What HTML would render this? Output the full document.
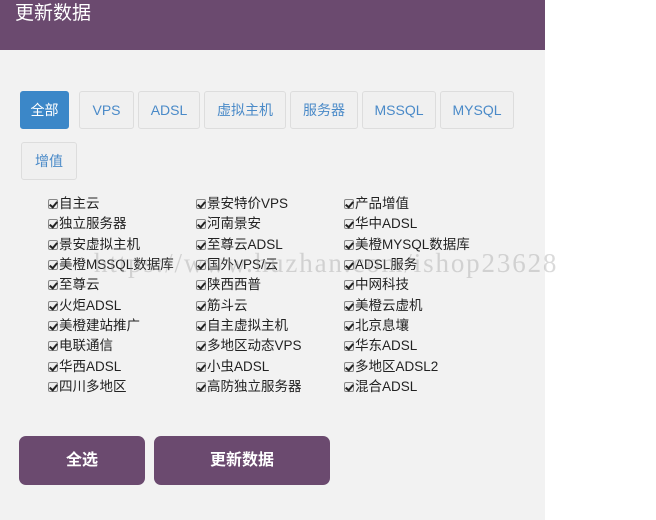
<!DOCTYPE html>
<html><head><meta charset="utf-8"><style>
*{margin:0;padding:0;box-sizing:border-box}
body{width:656px;height:520px;background:#fff;font-family:"Liberation Sans","Noto Sans CJK SC",sans-serif;position:relative;overflow:hidden}
.panel{position:absolute;left:0;top:0;width:545px;height:520px;background:#f2f2f2}
.hd{position:absolute;left:0;top:0;width:545px;height:50px;background:#6b4a6f;color:#fff;font-size:19px;padding:2px 0 0 15px;line-height:24px}
.tab{position:absolute;height:38px;border:1px solid #ddd;border-radius:3px;background:#f0f0f0;color:#4a8ac8;font-size:14px;text-align:center;line-height:36px}
.tab.on{background:#3b87c8;color:#fff;border-color:#3b87c8}
.cb{position:absolute;font-size:13.5px;color:#222;line-height:20px;white-space:nowrap}
.cb i{display:inline-block;width:10px;height:10px;border:1px solid #888;border-radius:2px;background:#eee;vertical-align:-1px;margin-right:1px;position:relative}
.cb i:after{content:"";position:absolute;left:2px;top:0px;width:3px;height:6px;border:solid #222;border-width:0 2px 2px 0;transform:rotate(40deg)}
.btn{position:absolute;top:436px;height:49px;background:#6b4a6f;border-radius:7px;color:#fff;font-weight:bold;font-size:16px;text-align:center;line-height:49px}
.wm{position:absolute;left:94px;top:248px;font-family:"Liberation Serif",serif;font-size:27px;color:rgba(150,150,150,0.35);letter-spacing:1.85px;white-space:nowrap}
</style></head><body>
<div class="panel"></div>
<div class="hd">更新数据</div>
<div class="tab on" style="left:20px;top:91px;width:49px">全部</div>
<div class="tab" style="left:79px;top:91px;width:55px">VPS</div>
<div class="tab" style="left:138px;top:91px;width:62px">ADSL</div>
<div class="tab" style="left:204px;top:91px;width:82px">虚拟主机</div>
<div class="tab" style="left:290px;top:91px;width:68px">服务器</div>
<div class="tab" style="left:362px;top:91px;width:74px">MSSQL</div>
<div class="tab" style="left:440px;top:91px;width:74px">MYSQL</div>
<div class="tab" style="left:21px;top:142px;width:56px">增值</div>

<div class="cb" style="left:48px;top:194px"><i></i>自主云</div>
<div class="cb" style="left:48px;top:214px"><i></i>独立服务器</div>
<div class="cb" style="left:48px;top:235px"><i></i>景安虚拟主机</div>
<div class="cb" style="left:48px;top:255px"><i></i>美橙MSSQL数据库</div>
<div class="cb" style="left:48px;top:275px"><i></i>至尊云</div>
<div class="cb" style="left:48px;top:296px"><i></i>火炬ADSL</div>
<div class="cb" style="left:48px;top:316px"><i></i>美橙建站推广</div>
<div class="cb" style="left:48px;top:336px"><i></i>电联通信</div>
<div class="cb" style="left:48px;top:357px"><i></i>华西ADSL</div>
<div class="cb" style="left:48px;top:377px"><i></i>四川多地区</div>

<div class="cb" style="left:196px;top:194px"><i></i>景安特价VPS</div>
<div class="cb" style="left:196px;top:214px"><i></i>河南景安</div>
<div class="cb" style="left:196px;top:235px"><i></i>至尊云ADSL</div>
<div class="cb" style="left:196px;top:255px"><i></i>国外VPS/云</div>
<div class="cb" style="left:196px;top:275px"><i></i>陕西西普</div>
<div class="cb" style="left:196px;top:296px"><i></i>筋斗云</div>
<div class="cb" style="left:196px;top:316px"><i></i>自主虚拟主机</div>
<div class="cb" style="left:196px;top:336px"><i></i>多地区动态VPS</div>
<div class="cb" style="left:196px;top:357px"><i></i>小虫ADSL</div>
<div class="cb" style="left:196px;top:377px"><i></i>高防独立服务器</div>

<div class="cb" style="left:344px;top:194px"><i></i>产品增值</div>
<div class="cb" style="left:344px;top:214px"><i></i>华中ADSL</div>
<div class="cb" style="left:344px;top:235px"><i></i>美橙MYSQL数据库</div>
<div class="cb" style="left:344px;top:255px"><i></i>ADSL服务</div>
<div class="cb" style="left:344px;top:275px"><i></i>中网科技</div>
<div class="cb" style="left:344px;top:296px"><i></i>美橙云虚机</div>
<div class="cb" style="left:344px;top:316px"><i></i>北京息壤</div>
<div class="cb" style="left:344px;top:336px"><i></i>华东ADSL</div>
<div class="cb" style="left:344px;top:357px"><i></i>多地区ADSL2</div>
<div class="cb" style="left:344px;top:377px"><i></i>混合ADSL</div>

<div class="wm">https://www.huzhan.com/ishop23628</div>

<div class="btn" style="left:19px;width:126px">全选</div>
<div class="btn" style="left:154px;width:176px">更新数据</div>
</body></html>
